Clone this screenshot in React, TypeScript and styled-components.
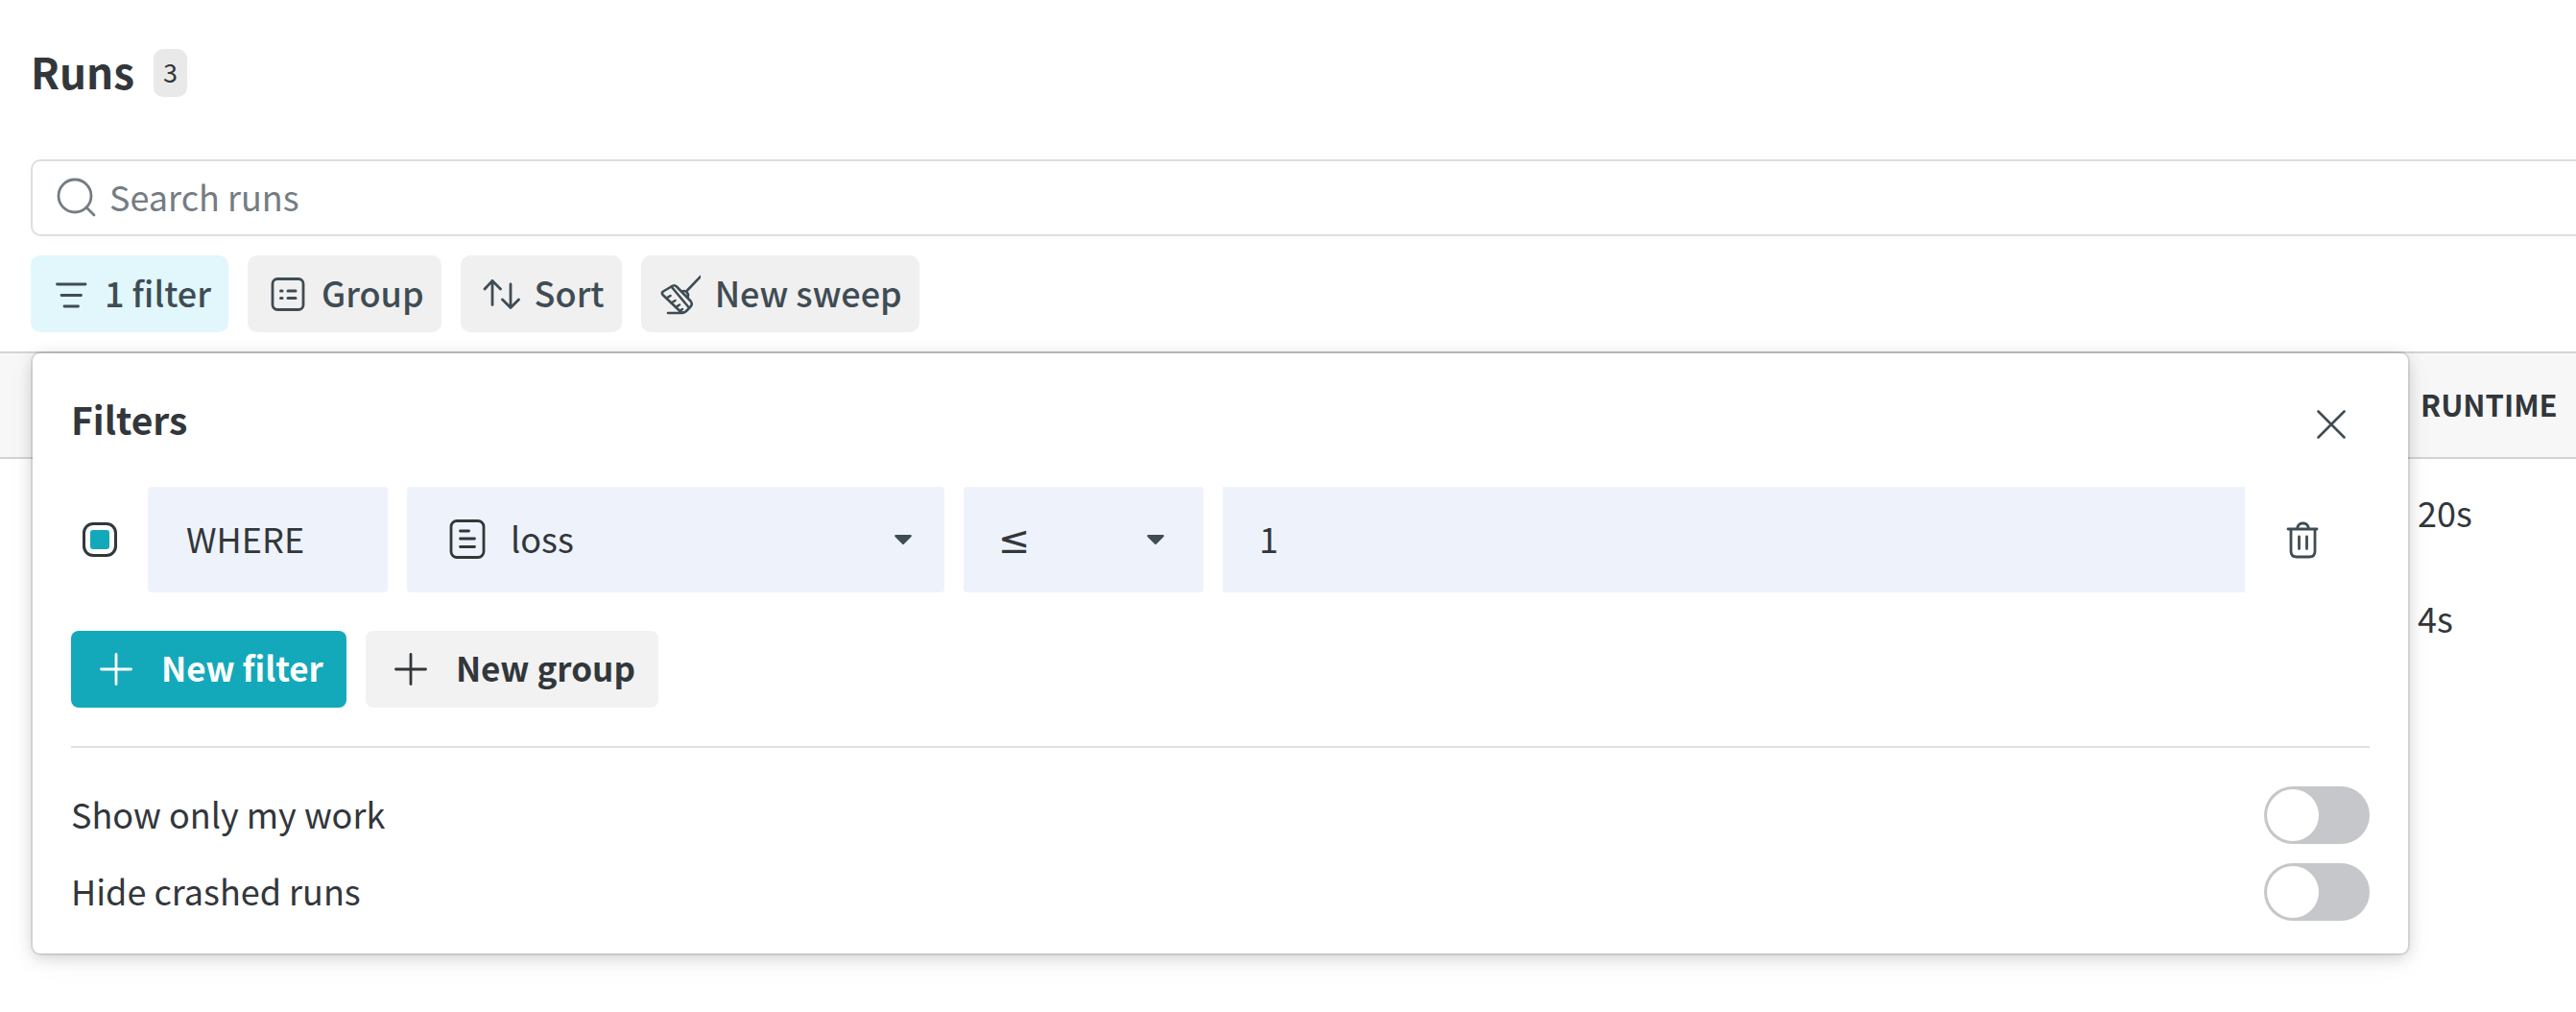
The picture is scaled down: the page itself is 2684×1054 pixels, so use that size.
import React, { useState } from "react";
import styled, { createGlobalStyle } from "styled-components";

const ink = "#32373b";
const slate = "#3f4c54";
const field = "#eef3fb";
const teal = "#13a9ba";

const GlobalStyle = createGlobalStyle`
  *, *::before, *::after { box-sizing: border-box; }
  body {
    margin: 0;
    background: #fff;
    color: ${ink};
    font-family: "Noto Sans CJK SC", "Open Sans", sans-serif;
    font-size: 36px;
    line-height: 60px;
  }
  button, input, select { font: inherit; color: inherit; }
`;

const Page = styled.main`
  display: flex;
  flex-direction: column;
  min-height: 100vh;
`;

const Header = styled.header`
  display: flex;
  align-items: center;
  gap: 20px;
  padding: 46px 32px 60px;
`;

const Title = styled.h1`
  margin: 0;
  padding-bottom: 4px;
  font-size: 44px;
  font-weight: 600;
  line-height: 56px;
`;

const Count = styled.span`
  padding: 0 10px 2px;
  border-radius: 10px;
  background: #e9e9e9;
  font-size: 27px;
  line-height: 48px;
`;

const SearchBox = styled.label`
  display: flex;
  align-items: center;
  gap: 12px;
  height: 80px;
  margin-left: 32px;
  padding-left: 24px;
  border: 2px solid #dddee0;
  border-right: 0;
  border-radius: 10px 0 0 10px;
  color: #757c83;
`;

const SearchInput = styled.input`
  flex: 1;
  min-width: 0;
  height: 60px;
  padding: 0 0 4px;
  border: 0;
  outline: 0;
  background: transparent;
  &::placeholder { color: #757c83; opacity: 1; }
`;

const Toolbar = styled.div`
  display: flex;
  gap: 20px;
  padding: 20px 32px;
`;

const ToolButton = styled.button<{ $active?: boolean }>`
  display: flex;
  align-items: center;
  gap: 15px;
  height: 80px;
  padding: 0 18px 0 20px;
  border: 0;
  border-radius: 10px;
  background: ${(p) => (p.$active ? "#e1f7fc" : "#f0f0f0")};
  color: ${slate};
  font-weight: 500;
  white-space: nowrap;
  cursor: pointer;
`;

const Label = styled.span`
  padding-bottom: 4px;
`;

const Results = styled.section`
  position: relative;
  flex: 1;
`;

const RunsTable = styled.table`
  width: 100%;
  border-collapse: separate;
  border-spacing: 0;
  table-layout: fixed;
`;

const HeadCell = styled.th`
  height: 112px;
  padding: 0 0 2px 12px;
  border-top: 2px solid #d3d4d6;
  border-bottom: 2px solid #d3d4d6;
  background: #f7f7f7;
  font-size: 31px;
  font-weight: 600;
  text-align: left;
`;

const RuntimeHead = styled(HeadCell)`
  width: 174px;
`;

const Cell = styled.td`
  height: 110px;
  padding: 0 0 0 9px;
`;

const Popover = styled.div`
  position: absolute;
  top: 2px;
  left: 34px;
  right: 175px;
  padding: 34px 40px;
  border-radius: 8px;
  background: #fff;
  box-shadow: 0 0 0 2px rgba(16, 22, 26, 0.1), 0 4px 16px rgba(16, 22, 26, 0.18),
    0 8px 36px rgba(16, 22, 26, 0.04);
`;

const PopoverHead = styled.div`
  display: flex;
  justify-content: space-between;
  margin-bottom: 25px;
`;

const PopoverTitle = styled.h2`
  margin: 0;
  font-size: 39px;
  font-weight: 600;
  line-height: 68px;
`;

const IconButton = styled.button`
  display: flex;
  align-items: center;
  justify-content: center;
  width: 80px;
  height: 80px;
  padding: 0;
  border: 0;
  background: transparent;
  color: ${slate};
  cursor: pointer;
`;

const FilterRow = styled.div`
  display: grid;
  grid-template-columns: 60px 250px 560px 250px 1fr 80px;
  column-gap: 20px;
  align-items: center;
  padding-right: 30px;
  margin-bottom: 40px;
`;

const EnabledBox = styled.input`
  appearance: none;
  justify-self: center;
  width: 36px;
  height: 36px;
  margin: 0;
  border: 3px solid ${ink};
  border-radius: 11px;
  background: #fff;
  cursor: pointer;
  &:checked { background: ${teal}; box-shadow: inset 0 0 0 5px #fff; }
`;

const Where = styled.span`
  height: 110px;
  padding: 0 40px 4px;
  border-radius: 4px;
  background: ${field};
  line-height: 106px;
`;

const SelectField = styled.label`
  display: grid;
  align-items: center;
  height: 110px;
  border-radius: 4px;
  background: ${field};
  > * { grid-area: 1 / 1; }
  > svg { pointer-events: none; }
`;

const LeadIcon = styled.svg`
  margin-left: 44px;
`;

const Caret = styled.svg<{ $gap: number }>`
  justify-self: end;
  margin-right: ${(p) => p.$gap}px;
`;

const Select = styled.select`
  appearance: none;
  width: 100%;
  height: 110px;
  padding: 0 60px 4px 108px;
  border: 0;
  outline: 0;
  background: transparent;
  cursor: pointer;
`;

const OperatorSelect = styled(Select)`
  padding: 0 60px 0 36px;
  font-family: "DejaVu Sans", sans-serif;
  font-size: 40px;
`;

const ValueInput = styled.input`
  width: 100%;
  min-width: 0;
  height: 110px;
  padding: 0 38px 4px;
  border: 0;
  outline: 0;
  background: ${field};
`;

const Actions = styled.div`
  display: flex;
  gap: 20px;
  padding-bottom: 40px;
  border-bottom: 2px solid #e1e1e3;
  margin-bottom: 40px;
`;

const ActionButton = styled.button<{ $primary?: boolean }>`
  display: flex;
  align-items: center;
  gap: 30px;
  height: 80px;
  padding: 0 24px 0 30px;
  border: 0;
  border-radius: 8px;
  background: ${(p) => (p.$primary ? teal : "#f2f2f2")};
  color: ${(p) => (p.$primary ? "#fff" : ink)};
  font-size: 35px;
  font-weight: 600;
  white-space: nowrap;
  cursor: pointer;
`;

const Options = styled.div`
  display: flex;
  flex-direction: column;
  gap: 20px;
`;

const Option = styled.label`
  display: flex;
  align-items: center;
  justify-content: space-between;
  height: 60px;
  cursor: pointer;
`;

const Switch = styled.input`
  appearance: none;
  width: 110px;
  height: 60px;
  margin: 0;
  padding: 3px;
  border-radius: 30px;
  background: #c6c7cb;
  cursor: pointer;
  &::before {
    content: "";
    display: block;
    width: 54px;
    height: 54px;
    border-radius: 50%;
    background: #fff;
  }
  &:checked { background: ${teal}; }
  &:checked::before { margin-left: auto; }
`;

const stroke = {
  fill: "none",
  stroke: "currentColor",
  strokeLinecap: "round" as const,
  strokeLinejoin: "round" as const,
  "aria-hidden": true,
};

const SearchIcon = () => (
  <svg width="44" height="44" viewBox="0 0 44 44" {...stroke} strokeWidth="2.8">
    <circle cx="20" cy="20" r="17" />
    <path d="M32 32l8 8" />
  </svg>
);

const FilterIcon = () => (
  <svg width="42" height="40" viewBox="0 0 42 40" {...stroke} strokeWidth="2.8">
    <path d="M7.500 10H37M12 21.500H32.500M15 33H29.500" />
  </svg>
);

const GroupIcon = () => (
  <svg width="42" height="40" viewBox="0 0 42 40" {...stroke} strokeWidth="2.8">
    <rect x="6" y="4.500" width="32" height="32" rx="5" />
    <path d="M14.500 17h1.500M22 17h8M14.500 24.500h1.500M22 24.500h8" strokeWidth="3" />
  </svg>
);

const SortIcon = () => (
  <svg width="42" height="40" viewBox="0 0 42 40" {...stroke} strokeWidth="2.8">
    <path d="M13 31.500V6.500M5 15l8-8.500L21.500 15M32 10V34.500M23.500 26l8.500 8.500L40.500 26" />
  </svg>
);

const BroomIcon = () => (
  <svg width="42" height="44" viewBox="0 0 42 44" {...stroke} strokeWidth="2.6">
    <path d="M42 4L28 18.500" />
    <path d="M22.500 19.500a4.500 4.500 0 0 1 6 6" />
    <path d="M11.500 14.500q3-2.500 5.500 0L31.500 29.500q2.500 3 0 6L27 40q-3 3-6 .5L2.500 23q-1.500-2 .5-3.500z" />
    <path d="M11.500 14.500L29.500 36" />
    <path d="M6.500 26.500l4-2.500M11.500 31.500l4-2.500M16 36l4-2.500M20 40l3-2M8 42H23" />
  </svg>
);

const CloseIcon = () => (
  <svg width="32" height="32" viewBox="0 0 32 32" {...stroke} strokeWidth="2.6">
    <path d="M2.500 2.500l27 27M29.500 2.500l-27 27" />
  </svg>
);

const TrashIcon = () => (
  <svg width="36" height="40" viewBox="0 0 36 40" {...stroke} strokeWidth="2.8">
    <path d="M3 9H33M12.500 9a5.500 6 0 0 1 5.500-6h1a5.500 6 0 0 1 5.500 6M6 9V32q0 6 6 6H25q6 0 6-6V9M14.500 17V29.500M22.500 17V29.500" />
  </svg>
);

const PlusIcon = () => (
  <svg width="34" height="34" viewBox="0 0 34 34" {...stroke} strokeWidth="2.8">
    <path d="M17 1.500V32.500M1.500 17H32.500" />
  </svg>
);

const DownCaret = ({ gap }: { gap: number }) => (
  <Caret $gap={gap} width="20" height="12" viewBox="0 0 20 12" aria-hidden="true">
    <path d="M2 1H18q1.500 .5 .5 2L11 10.500q-1 1-2 0L1.500 3q-1-1.500 .5-2z" fill={slate} />
  </Caret>
);

const runtimes = ["20s", "4s"];

export default function App() {
  const [enabled, setEnabled] = useState(true);
  return (
    <Page>
      <GlobalStyle />
      <Header>
        <Title>Runs</Title>
        <Count>3</Count>
      </Header>
      <SearchBox>
        <SearchIcon />
        <SearchInput type="text" placeholder="Search runs" aria-label="Search runs" />
      </SearchBox>
      <Toolbar>
        <ToolButton $active><FilterIcon /><Label>1 filter</Label></ToolButton>
        <ToolButton><GroupIcon /><Label>Group</Label></ToolButton>
        <ToolButton><SortIcon /><Label>Sort</Label></ToolButton>
        <ToolButton><BroomIcon /><Label>New sweep</Label></ToolButton>
      </Toolbar>
      <Results>
        <RunsTable>
          <thead>
            <tr>
              <HeadCell as="td" />
              <RuntimeHead scope="col">RUNTIME</RuntimeHead>
            </tr>
          </thead>
          <tbody>
            {runtimes.map((time) => (
              <tr key={time}>
                <Cell />
                <Cell>{time}</Cell>
              </tr>
            ))}
          </tbody>
        </RunsTable>
        <Popover role="dialog" aria-labelledby="filters-title">
          <PopoverHead>
            <PopoverTitle id="filters-title">Filters</PopoverTitle>
            <IconButton aria-label="Close"><CloseIcon /></IconButton>
          </PopoverHead>
          <FilterRow>
            <EnabledBox
              type="checkbox"
              aria-label="Filter enabled"
              checked={enabled}
              onChange={(e) => setEnabled(e.target.checked)}
            />
            <Where>WHERE</Where>
            <SelectField>
              <Select aria-label="Metric" defaultValue="loss">
                <option value="loss">loss</option>
              </Select>
              <LeadIcon width="38" height="44" viewBox="0 0 38 44" {...stroke} strokeWidth="2.8">
                <rect x="2" y="2.500" width="34" height="38" rx="6" />
                <path d="M11.500 13H20.500M11.500 21H26.500M11.500 29.500H26.500" />
              </LeadIcon>
              <DownCaret gap={33} />
            </SelectField>
            <SelectField>
              <OperatorSelect aria-label="Operator" defaultValue="lte">
                <option value="lte">≤</option>
              </OperatorSelect>
              <DownCaret gap={40} />
            </SelectField>
            <ValueInput type="text" aria-label="Value" defaultValue="1" />
            <IconButton aria-label="Delete filter"><TrashIcon /></IconButton>
          </FilterRow>
          <Actions>
            <ActionButton $primary><PlusIcon /><Label>New filter</Label></ActionButton>
            <ActionButton><PlusIcon /><Label>New group</Label></ActionButton>
          </Actions>
          <Options>
            <Option><Label>Show only my work</Label><Switch type="checkbox" role="switch" /></Option>
            <Option><Label>Hide crashed runs</Label><Switch type="checkbox" role="switch" /></Option>
          </Options>
        </Popover>
      </Results>
    </Page>
  );
}
